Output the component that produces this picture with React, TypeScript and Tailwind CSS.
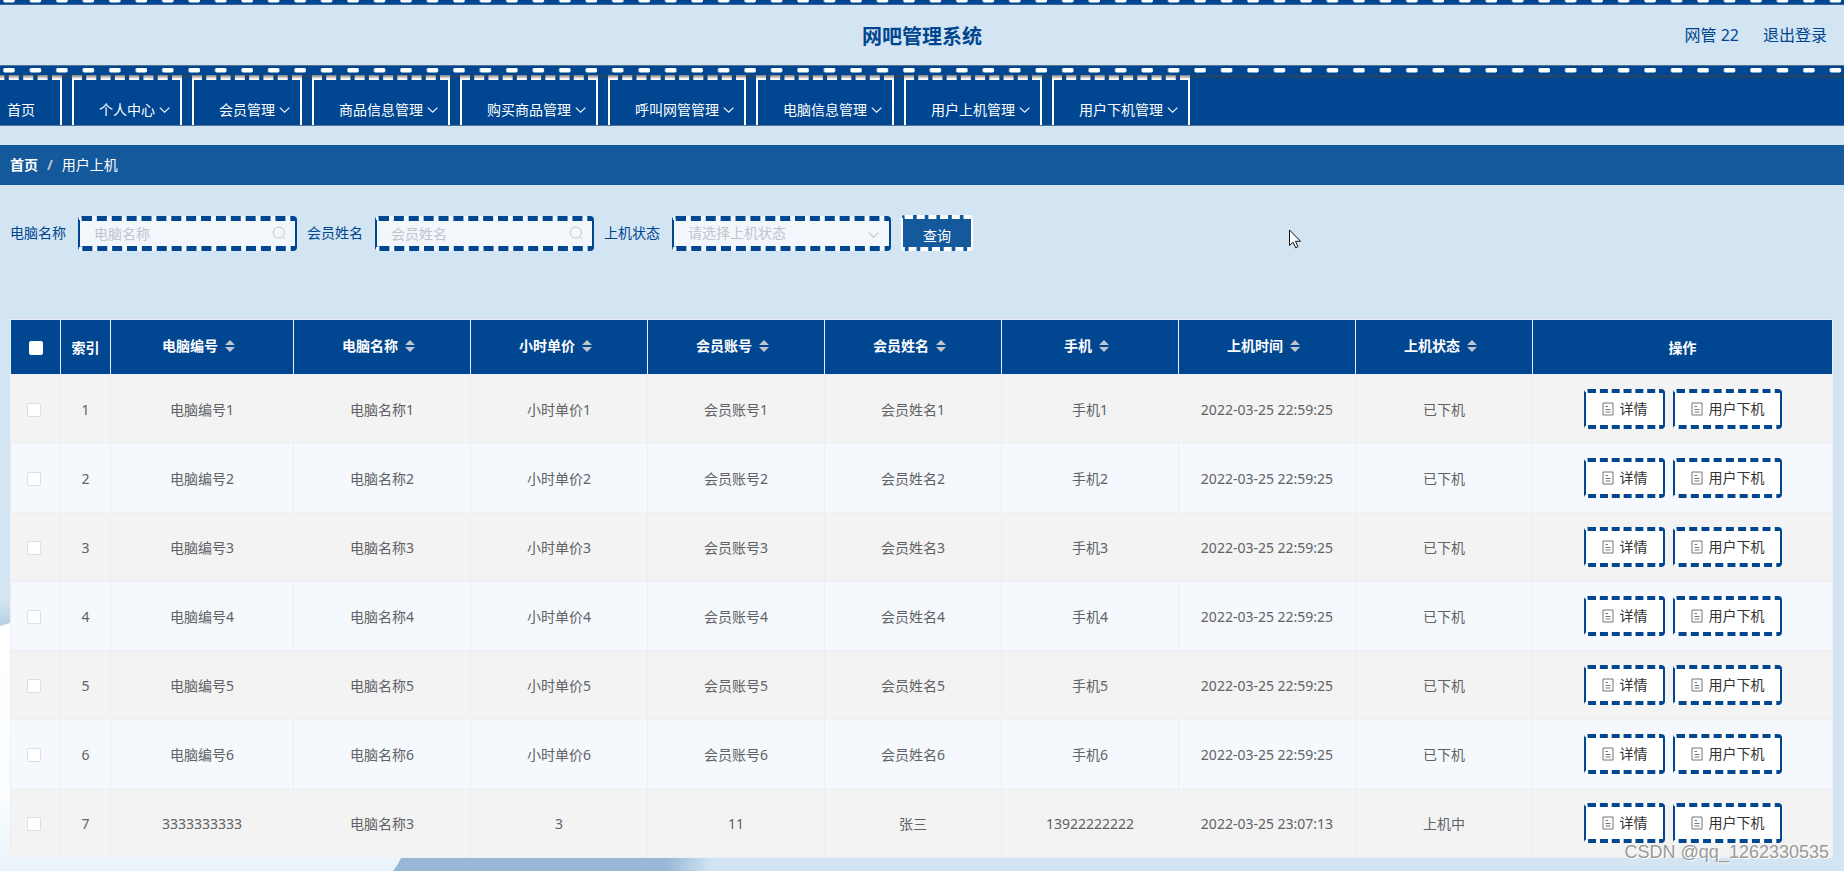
const navItems = [
  { label: '首页', hasMenu: false },
  { label: '个人中心', hasMenu: true },
  { label: '会员管理', hasMenu: true },
  { label: '商品信息管理', hasMenu: true },
  { label: '购买商品管理', hasMenu: true },
  { label: '呼叫网管管理', hasMenu: true },
  { label: '电脑信息管理', hasMenu: true },
  { label: '用户上机管理', hasMenu: true },
  { label: '用户下机管理', hasMenu: true },
];

const columns = ['电脑编号', '电脑名称', '小时单价', '会员账号', '会员姓名', '手机', '上机时间', '上机状态'];

const rows = [
  ['电脑编号1', '电脑名称1', '小时单价1', '会员账号1', '会员姓名1', '手机1', '2022-03-25 22:59:25', '已下机'],
  ['电脑编号2', '电脑名称2', '小时单价2', '会员账号2', '会员姓名2', '手机2', '2022-03-25 22:59:25', '已下机'],
  ['电脑编号3', '电脑名称3', '小时单价3', '会员账号3', '会员姓名3', '手机3', '2022-03-25 22:59:25', '已下机'],
  ['电脑编号4', '电脑名称4', '小时单价4', '会员账号4', '会员姓名4', '手机4', '2022-03-25 22:59:25', '已下机'],
  ['电脑编号5', '电脑名称5', '小时单价5', '会员账号5', '会员姓名5', '手机5', '2022-03-25 22:59:25', '已下机'],
  ['电脑编号6', '电脑名称6', '小时单价6', '会员账号6', '会员姓名6', '手机6', '2022-03-25 22:59:25', '已下机'],
  ['3333333333', '电脑名称3', '3', '11', '张三', '13922222222', '2022-03-25 23:07:13', '上机中'],
];

const fieldClass =
  'block h-[35px] w-[219px] appearance-none rounded border-x-2 border-y-[5px] border-[#004690] bg-white/70 pl-[14px] pr-8 text-sm leading-5 outline-none [border-block-style:dashed] [border-inline-style:solid]';

function FilmStrip({ id, className, dashY }: { id: string; className: string; dashY: number }) {
  return (
    <svg className={`block w-full ${className}`} aria-hidden="true">
      <defs>
        <pattern id={id} width="26.47" height="12" patternUnits="userSpaceOnUse">
          <rect x="3.3" y={dashY} width="11.4" height="4.4" rx="1.4" fill="#fff" />
        </pattern>
      </defs>
      <rect width="100%" height="100%" fill={`url(#${id})`} />
    </svg>
  );
}

function ArrowDown({ className }: { className: string }) {
  return (
    <svg className={`h-[14px] w-[14px] ${className}`} viewBox="0 0 14 14" fill="none" stroke="currentColor" aria-hidden="true">
      <path d="M1.8 4.6 6.6 9.2l4.8-4.6" strokeWidth="1.1" />
    </svg>
  );
}

function SearchIcon() {
  return (
    <svg
      className="pointer-events-none absolute right-[11px] top-[10px] h-[14px] w-[14px]"
      viewBox="0 0 14 14"
      fill="none"
      stroke="#c0c4cc"
      aria-hidden="true"
    >
      <circle cx="6.8" cy="6.5" r="5.5" />
      <path d="M10.6 10.6 13 13" />
    </svg>
  );
}

function SortIcon() {
  return (
    <svg className="ml-[7px] mr-[7px] h-3 w-[10px]" viewBox="0 0 10 12" fill="#c0c4cc" aria-hidden="true">
      <path d="M5 0 10 5H0zM0 7h10l-5 5z" />
    </svg>
  );
}

function TicketIcon() {
  return (
    <svg className="h-[14px] w-[14px]" viewBox="0 0 14 14" fill="none" stroke="#666" aria-hidden="true">
      <path d="M2 1h10v12H2z" strokeWidth="0.9" />
      <path d="M4.5 4.5h2.5M4.5 7.5h5M4.5 10h5" strokeWidth="0.9" />
    </svg>
  );
}

function RowButton({ label }: { label: string }) {
  return (
    <button
      type="button"
      className="flex h-10 items-center gap-[5px] rounded border-x-2 border-y-4 border-[#004690] bg-white px-[15px] text-sm text-[#333] [border-block-style:dashed] [border-inline-style:solid]"
    >
      <TicketIcon />
      {label}
    </button>
  );
}

function Backdrop() {
  return (
    <svg className="absolute bottom-0 left-0 -z-10 h-[271px] w-[760px]" viewBox="0 0 760 271" aria-hidden="true">
      <defs>
        <linearGradient id="side" x1="0" y1="0" x2="0" y2="1">
          <stop offset="0" stopColor="#d3e5f3" />
          <stop offset="1" stopColor="#b3cbdd" />
        </linearGradient>
        <linearGradient id="wave" x1="0" y1="0" x2="1" y2="0">
          <stop offset="0.86" stopColor="#96b8d6" />
          <stop offset="1" stopColor="#d3e5f3" />
        </linearGradient>
        <linearGradient id="foam" x1="0" y1="0" x2="0" y2="1">
          <stop offset="0" stopColor="#ffffff" />
          <stop offset="0.7" stopColor="#fbfdfe" />
          <stop offset="1" stopColor="#e8f4fb" />
        </linearGradient>
      </defs>
      <path d="M0 0h10v30H0z" fill="url(#side)" />
      <path d="M380 257h332v14H380z" fill="url(#wave)" />
      <path d="M0 26 10 23l340 200 51 35q-3 7-8 13H0z" fill="url(#foam)" />
    </svg>
  );
}

export default function App() {
  return (
    <div className="relative isolate min-h-screen overflow-hidden bg-[#d3e5f3] font-['Noto_Sans','Noto_Sans_CJK_SC',sans-serif] text-sm text-[#606266]">
      <Backdrop />

      <header>
        <div className="h-[5px] border-b border-[#3a6595] bg-[#004690]">
          <FilmStrip id="film-top" className="h-1" dashY={-2} />
        </div>
        <div className="grid h-[60px] grid-cols-[1fr_auto_1fr] items-center text-[#00468f]">
          <h1 className="col-start-2 pt-[3px] text-xl font-bold">网吧管理系统</h1>
          <div className="flex items-center justify-end gap-6 pr-[17px] text-base">
            <span>网管 22</span>
            <a href="#logout">退出登录</a>
          </div>
        </div>
      </header>

      {/* Main menu */}
      <nav className="relative h-[61px] border-y border-[#56718f] bg-[#004690]">
        <FilmStrip id="film-nav" className="h-[9px]" dashY={2} />
        <ul className="-ml-5 flex gap-[10px] text-white">
          {navItems.map((item) => (
            <li key={item.label}>
              <a
                href="#menu"
                className={`flex h-[50px] items-center border-x-2 border-t-[5px] border-white pl-[25px] pt-[15px] [border-top-style:dashed] ${
                  item.hasMenu ? 'pr-2' : 'pr-[25px]'
                }`}
              >
                {item.label}
                {item.hasMenu && <ArrowDown className="ml-[3px]" />}
              </a>
            </li>
          ))}
        </ul>
        <div className="pointer-events-none absolute inset-x-0 top-[9px] h-1 bg-linear-to-b from-[#444]/70 to-transparent" />
      </nav>

      <div className="mt-[19px] flex h-10 items-center gap-[9px] bg-[#14599c] px-[10px] text-white">
        <a href="#home" className="font-bold">首页</a>
        <span className="font-bold text-[#c0c4cc]">/</span>
        <span>用户上机</span>
      </div>

      <main className="pl-[10px] pr-[11px]">
        {/* Filters */}
        <form className="flex items-center gap-[10px] pt-[30px] text-[#00468f]">
          <div className="flex items-center gap-3">
            <label htmlFor="pc-name">电脑名称</label>
            <div className="relative">
              <input id="pc-name" placeholder="电脑名称" className={`${fieldClass} placeholder:text-[#c0c4cc]`} />
              <SearchIcon />
            </div>
          </div>
          <div className="flex items-center gap-3">
            <label htmlFor="member-name">会员姓名</label>
            <div className="relative">
              <input id="member-name" placeholder="会员姓名" className={`${fieldClass} placeholder:text-[#c0c4cc]`} />
              <SearchIcon />
            </div>
          </div>
          <div className="flex items-center gap-3">
            <label htmlFor="status">上机状态</label>
            <div className="relative">
              <select id="status" defaultValue="" className={`${fieldClass} text-[#c0c4cc]`}>
                <option value="">请选择上机状态</option>
                <option>上机中</option>
                <option>已下机</option>
              </select>
              <ArrowDown className="pointer-events-none absolute right-[10px] top-3 text-[#c0c4cc]" />
            </div>
          </div>
          <button
            type="button"
            className="h-9 w-[72px] rounded border-x-2 border-y-4 border-white bg-[#14599c] pt-[5px] text-sm text-white [border-block-style:dashed] [border-inline-style:solid]"
          >
            查询
          </button>
        </form>

        <table className="mt-[68px] w-full table-fixed border-separate border-spacing-0 border-l border-t border-[#ebeef5] text-center">
          <colgroup>
            <col className="w-[50px]" />
            <col className="w-[50px]" />
            <col className="w-[183px]" />
            <col span={7} />
            <col className="w-[300px]" />
          </colgroup>
          <thead className="bg-[#004690] text-white">
            <tr className="h-[55px]">
              <th className="border-b border-r border-[#ebeef5] pt-[2px]">
                <input type="checkbox" aria-label="全选" className="mx-auto block h-[14px] w-[14px] appearance-none rounded-xs bg-white" />
              </th>
              <th className="border-b border-r border-[#ebeef5] pt-[2px]">索引</th>
              {columns.map((name) => (
                <th key={name} className="border-b border-r border-[#ebeef5]">
                  <div className="flex items-center justify-center pb-[2px]">
                    {name}
                    <SortIcon />
                  </div>
                </th>
              ))}
              <th className="border-b border-r border-[#ebeef5] pt-[2px]">操作</th>
            </tr>
          </thead>
          <tbody>
            {rows.map((row, index) => (
              <tr key={index} className="h-[69px] odd:bg-[#f3f3f3] even:bg-[#f5f8fc]">
                <td className="border-b border-r border-[#ebeef5] pr-1 pt-[2px]">
                  <input
                    type="checkbox"
                    aria-label={`选择第 ${index + 1} 行`}
                    className="mx-auto block h-[14px] w-[14px] appearance-none rounded-xs border border-[#dcdfe6] bg-white"
                  />
                </td>
                <td className="border-b border-r border-[#ebeef5] pt-[2px]">{index + 1}</td>
                {row.map((value, i) => (
                  <td key={i} className="border-b border-r border-[#ebeef5] pt-[2px]">{value}</td>
                ))}
                <td className="border-b border-r border-[#ebeef5]">
                  <div className="flex justify-center gap-2">
                    <RowButton label="详情" />
                    <RowButton label="用户下机" />
                  </div>
                </td>
              </tr>
            ))}
          </tbody>
        </table>
      </main>

      {/* Mouse pointer */}
      <svg className="absolute left-[1289px] top-[229px] h-5 w-[13px]" viewBox="0 0 13 20" fill="#fff" stroke="#111" aria-hidden="true">
        <path d="M.5 1v15.5l3.6-3.4 2.5 5.7 2.3-1-2.4-5.5h5z" />
      </svg>

      <p className="absolute bottom-[7px] right-[15px] font-['Liberation_Sans',sans-serif] text-lg leading-6 text-[#999] [text-shadow:1px_1px_0_#fff]">
        CSDN @qq_1262330535
      </p>
    </div>
  );
}
